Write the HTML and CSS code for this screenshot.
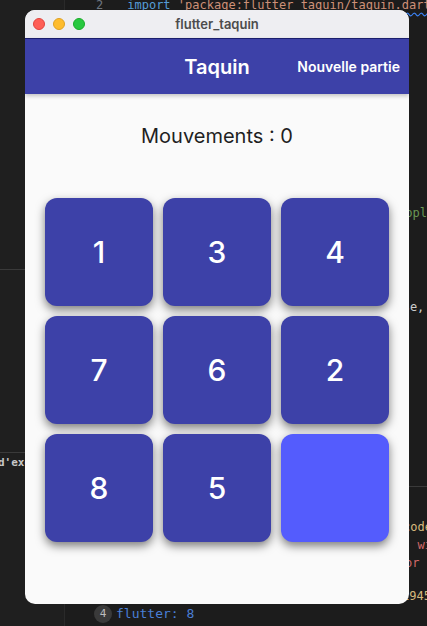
FILE: index.html
```html
<!DOCTYPE html>
<html lang="fr">
<head>
<meta charset="utf-8">
<title>flutter_taquin</title>
<link rel="stylesheet" href="styles.css">
</head>
<body>
<div class="desktop">
  <div class="editor">
    <div class="side"></div>
    <div class="code top"><span class="ln">2</span><span class="kw">import</span> <span class="str">'package:flutter_taquin/taquin.dart';</span></div>
    <div class="hline h1"></div>
    <div class="hline h2"></div>
    <div class="code c-opl green">appl</div>
    <div class="code c-e">false,</div>
    <div class="rline"></div>
    <div class="code c-ode yellow">code</div>
    <div class="code c-w red">  wi</div>
    <div class="code c-or red">or c</div>
    <div class="code c-945 yellow">1945</div>
    <div class="code c-exe">d'exécution</div>
    <div class="code c-bottom"><span class="badge">4</span><span class="blue">flutter: 8</span></div>
  </div>

  <div class="window">
    <div class="titlebar">
      <div class="lights">
        <span class="light red-l"></span>
        <span class="light yellow-l"></span>
        <span class="light green-l"></span>
      </div>
      <div class="wtitle">flutter_taquin</div>
    </div>
    <div class="appbar">
      <div class="apptitle">Taquin</div>
      <div class="action">Nouvelle partie</div>
    </div>
    <div class="content">
      <div class="moves">Mouvements : 0</div>
      <div class="grid">
        <div class="tile">1</div>
        <div class="tile">3</div>
        <div class="tile">4</div>
        <div class="tile">7</div>
        <div class="tile">6</div>
        <div class="tile">2</div>
        <div class="tile">8</div>
        <div class="tile">5</div>
        <div class="tile empty"></div>
      </div>
    </div>
  </div>
</div>
</body>
</html>
```

FILE: styles.css
```css
html, body {
  margin: 0;
  padding: 0;
}
body {
  width: 427px;
  height: 626px;
  overflow: hidden;
  background: #1e1e1e;
  font-family: Inter, "Noto Sans", sans-serif;
}
.desktop {
  position: relative;
  width: 427px;
  height: 626px;
}
.editor {
  position: absolute;
  inset: 0;
  background: #1c1c1c;
  font-family: "DejaVu Sans Mono", monospace;
  font-size: 12px;
  color: #cccccc;
}
.side {
  position: absolute;
  left: 0;
  top: 0;
  width: 64px;
  height: 626px;
  background: #1f1f1f;
  border-right: 1px solid #2a2a2a;
}
.code {
  position: absolute;
  white-space: pre;
  line-height: 16px;
}
.top {
  left: 96px;
  top: -3px;
}
.ln {
  color: #6e7681;
  margin-right: 24px;
}
.kw { color: #569cd6; }
.str {
  color: #ce9178;
  text-decoration: underline wavy #3b82f6;
  text-underline-offset: 3px;
}
.hline {
  position: absolute;
  left: 0;
  width: 64px;
  height: 1px;
  background: #3a3a3a;
}
.h1 { top: 269px; }
.h2 { top: 452px; }
.rline {
  position: absolute;
  left: 409px;
  width: 18px;
  top: 486px;
  height: 1px;
  background: #3a3a3a;
}
.green { color: #6a9955; }
.yellow { color: #d7ba7d; }
.red { color: #d16969; }
.blue { color: #4a7fd6; }
.c-opl { left: 398px; top: 205px; }
.c-e { left: 381px; top: 299px; }
.c-ode { left: 403px; top: 519px; }
.c-w { left: 403px; top: 537px; }
.c-or { left: 405px; top: 555px; }
.c-945 { left: 402px; top: 588px; }
.c-exe { left: -2px; top: 455px; color: #c8c8c8; font-weight: bold; font-size: 11px; }
.c-bottom {
  left: 94px;
  top: 605px;
  display: flex;
  align-items: center;
  gap: 4px;
  font-size: 13px;
}
.badge {
  display: inline-flex;
  justify-content: center;
  align-items: center;
  width: 18px;
  height: 18px;
  border-radius: 9px;
  background: #3a3a3a;
  color: #bdbdbd;
  font-size: 11px;
}

.window {
  position: absolute;
  left: 25px;
  top: 10px;
  width: 384px;
  height: 594px;
  border-radius: 10px;
  overflow: hidden;
  background: #fafafa;
  display: flex;
  flex-direction: column;
}
.titlebar {
  height: 28px;
  background: #eeeef2;
  display: flex;
  align-items: center;
  position: relative;
  flex-shrink: 0;
}
.lights {
  display: flex;
  gap: 8px;
  padding-left: 8px;
}
.light {
  width: 12px;
  height: 12px;
  border-radius: 50%;
  box-sizing: border-box;
}
.red-l { background: #fe5f57; border: 0.5px solid #e0443e; }
.yellow-l { background: #febc2e; border: 0.5px solid #dea123; }
.green-l { background: #28c840; border: 0.5px solid #1aab29; }
.wtitle {
  position: absolute;
  left: 0;
  right: 0;
  text-align: center;
  font-size: 13px;
  font-weight: 600;
  color: #4c4c4c;
}
.appbar {
  height: 56px;
  background: #3d41a8;
  border-top: 1px solid #1b1f6e;
  box-sizing: border-box;
  display: flex;
  align-items: center;
  position: relative;
  flex-shrink: 0;
  box-shadow: 0 2px 4px rgba(0,0,0,0.22);
  z-index: 1;
}
.apptitle {
  position: absolute;
  left: 0;
  right: 0;
  text-align: center;
  color: #ffffff;
  font-size: 20px;
  font-weight: 600;
}
.action {
  margin-left: auto;
  margin-right: 9px;
  color: #ffffff;
  font-size: 14px;
  font-weight: 600;
  position: relative;
}
.content {
  flex: 1;
  display: flex;
  flex-direction: column;
  align-items: center;
  padding-top: 30px;
}
.moves {
  font-size: 20px;
  line-height: 24px;
  color: #1f1f1f;
}
.grid {
  margin-top: 50px;
  display: grid;
  grid-template-columns: repeat(3, 108px);
  grid-auto-rows: 108px;
  gap: 10px;
}
.tile {
  background: #3d41a8;
  border-radius: 12px;
  color: #ffffff;
  font-size: 30px;
  font-weight: 550;
  display: flex;
  align-items: center;
  justify-content: center;
  box-shadow: 0 4px 10px rgba(0,0,0,0.5);
}
.tile.empty {
  background: #545cfd;
}
```
